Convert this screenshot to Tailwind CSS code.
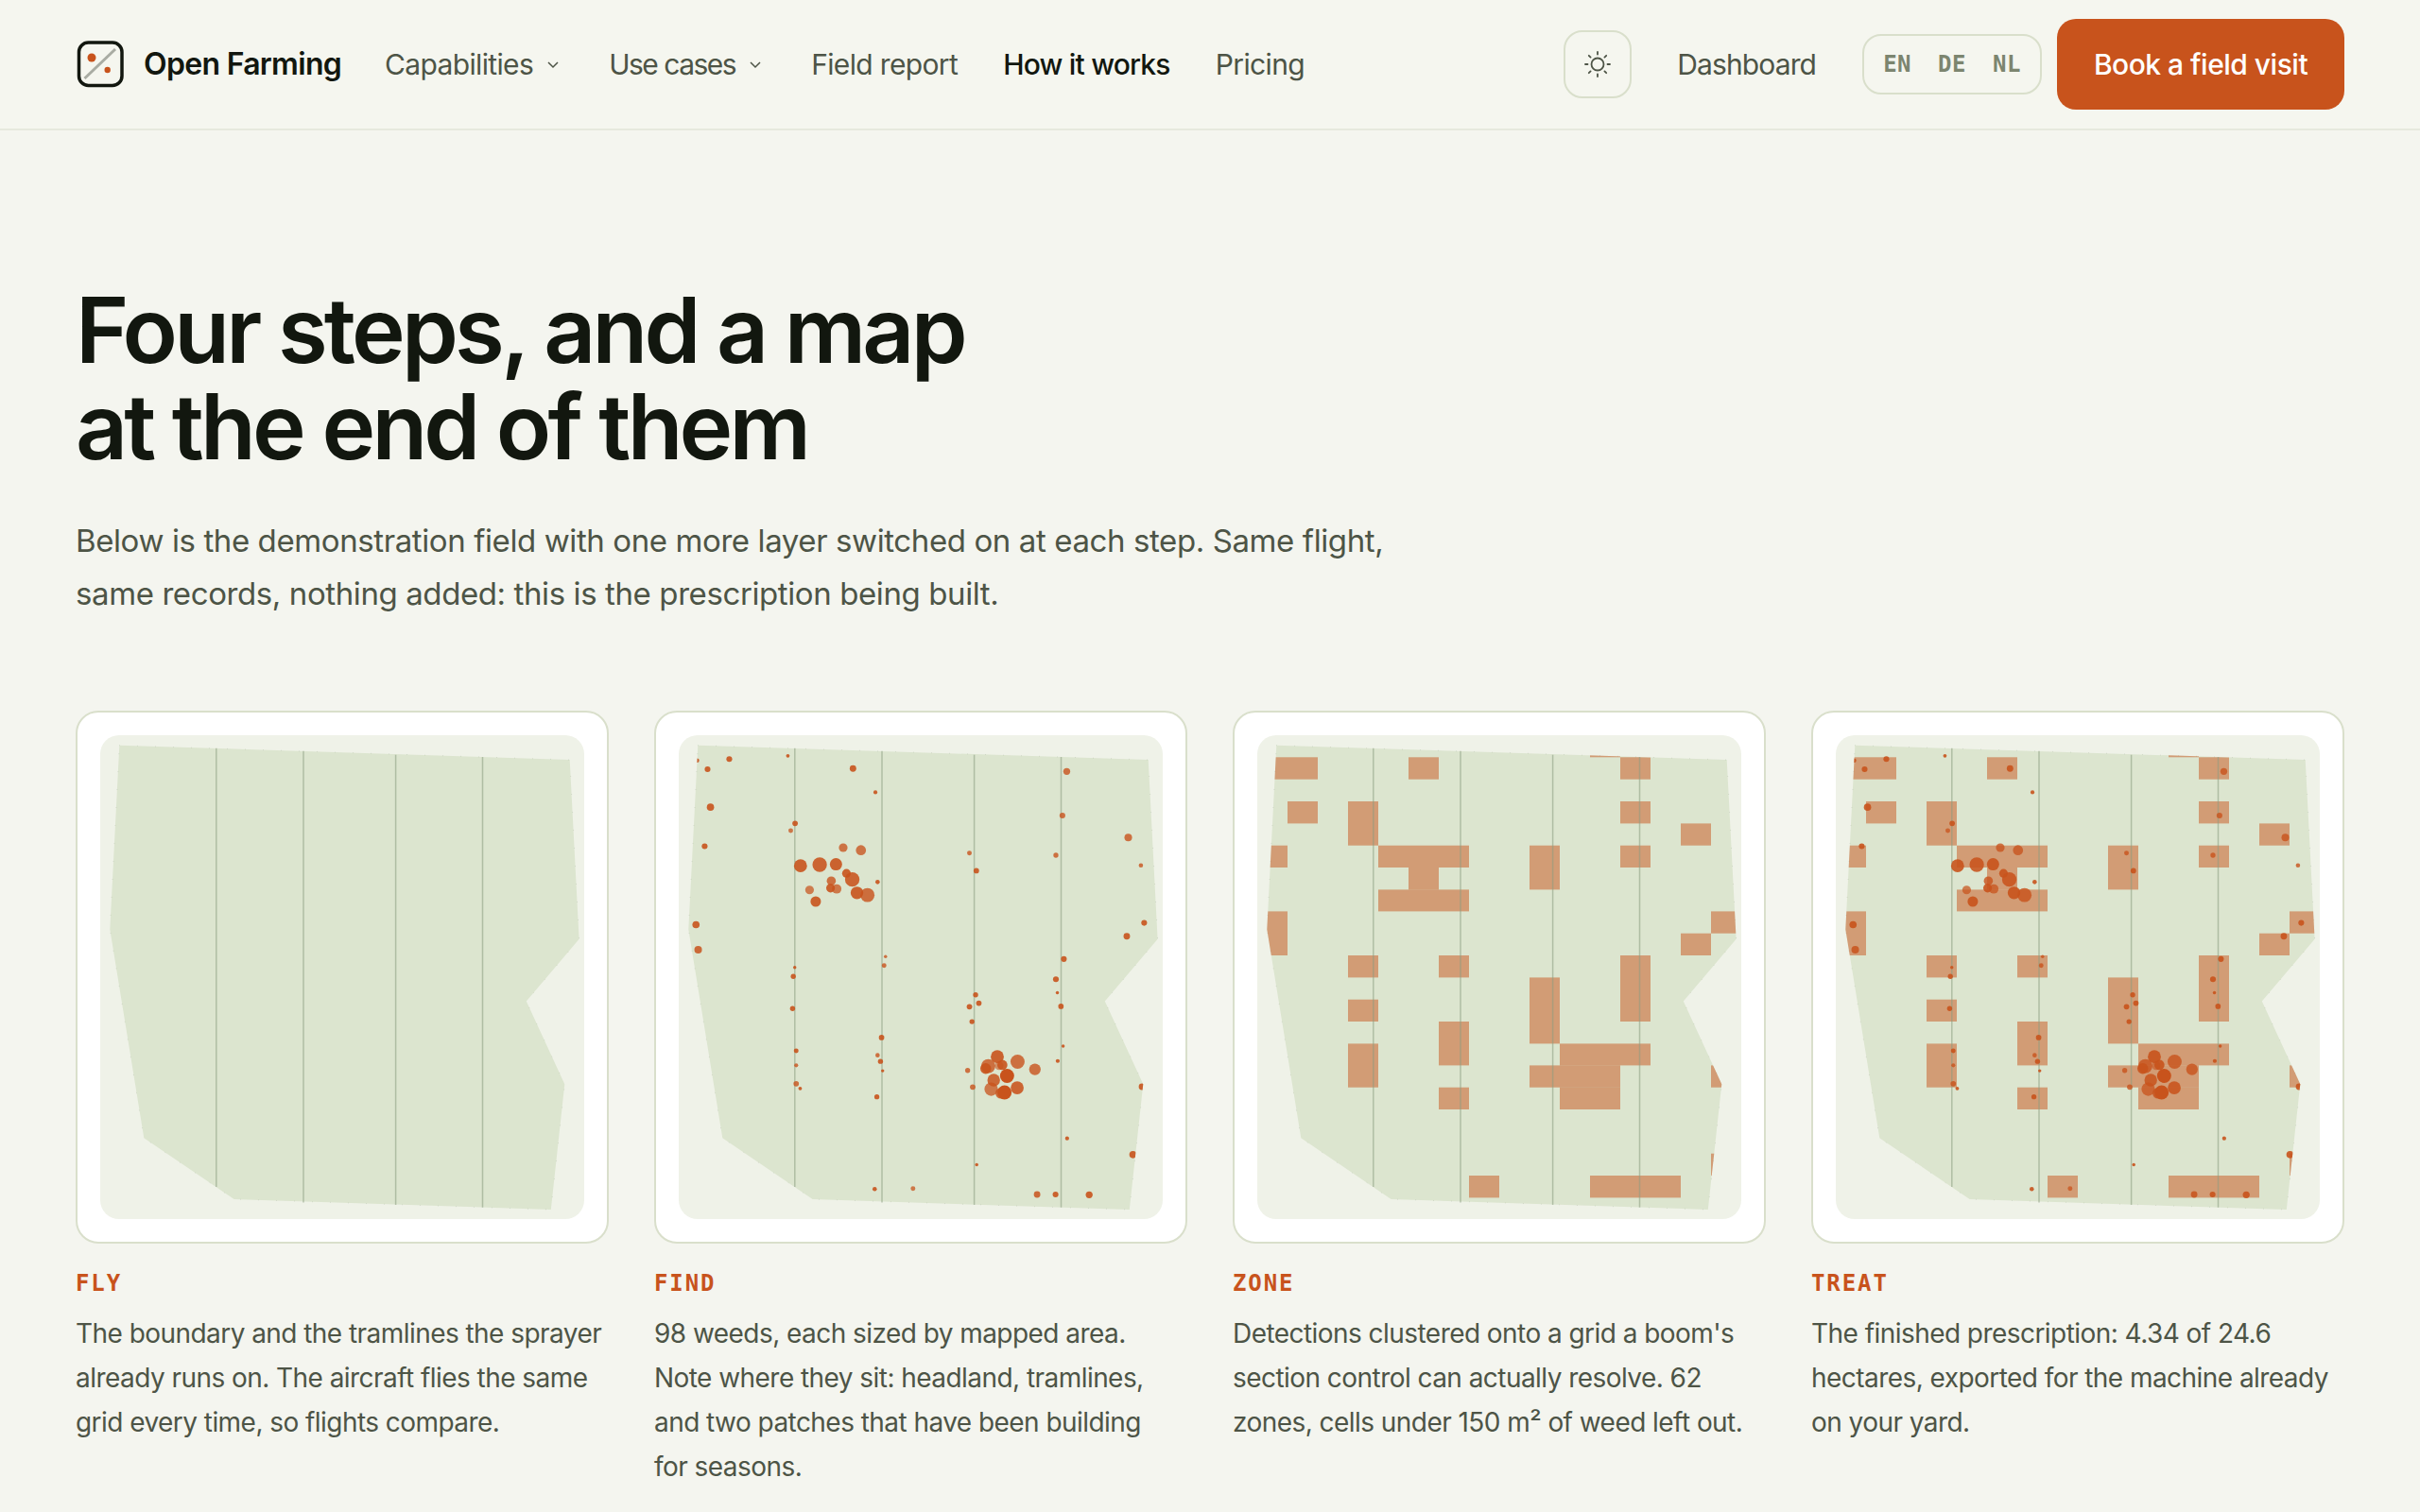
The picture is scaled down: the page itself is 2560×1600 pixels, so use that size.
<!DOCTYPE html>
<html lang="en">
  <head>
    <meta charset="UTF-8" />
    <meta name="viewport" content="width=device-width, initial-scale=1.0" />
    <title>How it works - Open Farming</title>
    <script src="https://cdn.jsdelivr.net/npm/@tailwindcss/browser@4"></script>
  </head>
  <body class="bg-[#f4f5ef] min-h-screen font-['Inter',sans-serif] text-[#12170f] overflow-hidden">
    <!-- shared map layers, each card uses the ones it needs -->
    <svg class="absolute w-0 h-0" aria-hidden="true">
      <defs>
        <clipPath id="field-clip">
          <polygon points="20.3,10.7 496.7,26 506.6,215.8 450.8,281.6 491.3,369.3 476.8,502 141.6,491 46.3,426.3 10.3,205.5" />
        </clipPath>
        <g id="field">
          <polygon fill="#dce5cf" stroke="#6f7f66" stroke-opacity="0.35" stroke-width="0.7" stroke-dasharray="0.7 18.3" points="20.3,10.7 496.7,26 506.6,215.8 450.8,281.6 491.3,369.3 476.8,502 141.6,491 46.3,426.3 10.3,205.5" />
        </g>
        <g id="tramlines" stroke="#8b9c80" stroke-opacity="0.55" stroke-width="1.5">
          <line x1="122.8" y1="13.8" x2="122.8" y2="478" />
          <line x1="215" y1="16.8" x2="215" y2="494.4" />
          <line x1="312.6" y1="20.7" x2="312.6" y2="497" />
          <line x1="404.5" y1="23" x2="404.5" y2="499.8" />
        </g>
        <g id="zones" clip-path="url(#field-clip)" fill="#c8531c" fill-opacity="0.5">
          <rect x="352" y="0" width="32" height="23.3" />
          <rect x="0" y="23.3" width="64" height="23.4" />
          <rect x="160" y="23.3" width="32" height="23.4" />
          <rect x="384" y="23.3" width="32" height="23.4" />
          <rect x="32" y="70" width="32" height="23.4" />
          <rect x="96" y="70" width="32" height="46.7" />
          <rect x="384" y="70" width="32" height="23.4" />
          <rect x="448" y="93.4" width="32" height="23.3" />
          <rect x="0" y="116.7" width="32" height="23.3" />
          <rect x="128" y="116.7" width="96" height="23.3" />
          <rect x="288" y="116.7" width="32" height="46.7" />
          <rect x="384" y="116.7" width="32" height="23.3" />
          <rect x="160" y="140" width="32" height="23.4" />
          <rect x="128" y="163.4" width="96" height="23" />
          <rect x="0" y="186.4" width="32" height="46.6" />
          <rect x="480" y="186.4" width="32" height="23.3" />
          <rect x="448" y="209.7" width="32" height="23.3" />
          <rect x="96" y="233" width="32" height="23.4" />
          <rect x="192" y="233" width="32" height="23.4" />
          <rect x="384" y="233" width="32" height="70" />
          <rect x="288" y="256.4" width="32" height="70" />
          <rect x="96" y="279.7" width="32" height="23.3" />
          <rect x="192" y="303" width="32" height="46.4" />
          <rect x="96" y="326.4" width="32" height="46.3" />
          <rect x="320" y="326.4" width="96" height="23" />
          <rect x="288" y="349.4" width="96" height="23.3" />
          <rect x="480" y="349.4" width="32" height="23.3" />
          <rect x="192" y="372.7" width="32" height="23.3" />
          <rect x="320" y="372.7" width="64" height="23.3" />
          <rect x="480" y="442.7" width="32" height="23.3" />
          <rect x="224" y="466" width="32" height="23.4" />
          <rect x="352" y="466" width="96" height="23.4" />
        </g>
        <g id="weeds" clip-path="url(#field-clip)">
          <g transform="scale(0.38265) translate(-99.3 -98)" fill="#c8531c" fill-opacity="0.9">
            <circle cx="150" cy="168" r="6" /><circle cx="179" cy="192" r="8" /><circle cx="239" cy="164" r="8" />
            <circle cx="401" cy="155" r="5" /><circle cx="581" cy="190" r="9" /><circle cx="643" cy="256" r="5.5" />
            <circle cx="1172" cy="198" r="9.5" fill-opacity="0.8" /><circle cx="187" cy="297" r="10" /><circle cx="421" cy="342" r="7.5" />
            <circle cx="409" cy="362" r="6.5" fill-opacity="0.75" /><circle cx="1160" cy="320" r="8" fill-opacity="0.8" /><circle cx="171" cy="405" r="8" />
            <circle cx="1342" cy="381" r="10.5" fill-opacity="0.8" /><circle cx="903" cy="424" r="6.5" fill-opacity="0.8" /><circle cx="1142" cy="430" r="7" fill-opacity="0.8" />
            <circle cx="1377" cy="458" r="6" fill-opacity="0.8" /><circle cx="922" cy="473" r="7.5" />
            <circle cx="554" cy="409" r="12" fill-opacity="0.78" /><circle cx="603" cy="416" r="14" fill-opacity="0.78" /><circle cx="436" cy="459" r="18" />
            <circle cx="489" cy="456" r="20" fill-opacity="0.88" /><circle cx="534" cy="455" r="17" /><circle cx="563" cy="480" r="12" />
            <circle cx="579" cy="497" r="20" fill-opacity="0.88" /><circle cx="521" cy="501" r="12.5" fill-opacity="0.8" /><circle cx="519" cy="521" r="12" />
            <circle cx="536" cy="523" r="13" fill-opacity="0.75" /><circle cx="461" cy="526" r="12" fill-opacity="0.72" /><circle cx="592" cy="534" r="17.5" />
            <circle cx="621" cy="540" r="19.5" fill-opacity="0.82" /><circle cx="478" cy="558" r="14.5" /><circle cx="649" cy="504" r="6" />
            <circle cx="147" cy="622" r="10" /><circle cx="153" cy="691" r="10.5" fill-opacity="0.85" /><circle cx="1386" cy="617" r="8" />
            <circle cx="1338" cy="654" r="9" /><circle cx="671" cy="710" r="4.5" fill-opacity="0.8" /><circle cx="667" cy="735" r="6.5" fill-opacity="0.8" />
            <circle cx="420" cy="740" r="4.5" /><circle cx="416" cy="765" r="7" /><circle cx="1164" cy="717" r="8" />
            <circle cx="1142" cy="773" r="8" /><circle cx="1146" cy="810" r="4.5" /><circle cx="920" cy="816" r="7" />
            <circle cx="929" cy="839" r="7.5" /><circle cx="903" cy="849" r="7.5" /><circle cx="1156" cy="848" r="7.5" />
            <circle cx="414" cy="854" r="7" /><circle cx="910" cy="890" r="7" /><circle cx="660" cy="934" r="7.5" />
            <circle cx="1162" cy="958" r="4.5" /><circle cx="424" cy="971" r="6.5" /><circle cx="649" cy="983" r="6" fill-opacity="0.8" />
            <circle cx="657" cy="1000" r="7" /><circle cx="1147" cy="999" r="5.5" /><circle cx="424" cy="1011" r="5.5" fill-opacity="0.8" />
            <circle cx="663" cy="1026" r="4.5" /><circle cx="898" cy="1025" r="7" fill-opacity="0.8" />
            <circle cx="980" cy="987" r="18" /><circle cx="1036" cy="1001" r="19.5" fill-opacity="0.8" /><circle cx="955" cy="1013" r="19.5" fill-opacity="0.8" />
            <circle cx="985" cy="1012" r="12" fill-opacity="0.6" /><circle cx="994" cy="1010" r="14" /><circle cx="948" cy="1020" r="15" />
            <circle cx="1084" cy="1022" r="16" fill-opacity="0.8" /><circle cx="1007" cy="1040" r="19.5" fill-opacity="1" /><circle cx="970" cy="1052" r="17.5" fill-opacity="0.85" />
            <circle cx="1035" cy="1073" r="18" fill-opacity="0.88" /><circle cx="963" cy="1077" r="18.5" fill-opacity="0.75" /><circle cx="990" cy="1088" r="15" fill-opacity="0.85" />
            <circle cx="1000" cy="1086" r="19.5" fill-opacity="1" /><circle cx="912" cy="1071" r="7.5" fill-opacity="0.8" /><circle cx="424" cy="1062" r="7.5" fill-opacity="0.8" />
            <circle cx="435" cy="1075" r="5" /><circle cx="647" cy="1098" r="7" /><circle cx="1380" cy="1070" r="9" />
            <circle cx="1173" cy="1213" r="5.5" /><circle cx="1355" cy="1258" r="10" /><circle cx="923" cy="1286" r="4.5" />
            <circle cx="641" cy="1353" r="6" /><circle cx="747" cy="1352" r="6.5" fill-opacity="0.75" /><circle cx="1090" cy="1368" r="9" fill-opacity="0.85" />
            <circle cx="1141" cy="1368" r="8" /><circle cx="1234" cy="1369" r="9.5" />
          </g>
        </g>
      </defs>
    </svg>

    <header class="flex items-center h-[138px] pl-20 pr-20 border-b-2 border-[#e6e9dd] bg-[#f5f6ef]">
      <a href="#" class="flex items-center gap-[20px]">
        <svg width="52" height="52" viewBox="0 0 52 52" fill="none">
          <rect x="3.5" y="3" width="45.5" height="45.5" rx="10" stroke="#12170f" stroke-width="3.5" />
          <line x1="9.5" y1="41" x2="42" y2="10" stroke="#a9aca3" stroke-width="3" />
          <circle cx="17" cy="19" r="4.5" fill="#c8531c" />
          <circle cx="33.7" cy="32" r="3.2" fill="#c8531c" />
        </svg>
        <span class="text-[32px] font-semibold tracking-[-0.7px]">Open Farming</span>
      </a>
      <nav class="flex items-center gap-12 ml-[46px] text-[30px] text-[#4d5446]">
        <a href="#" class="flex items-center gap-[14px] mr-1 tracking-[-0.65px]">
          Capabilities
          <svg width="14" height="9" viewBox="0 0 14 9" fill="none" stroke="#4d5446" stroke-width="1.5"><path d="M2 2l5 5 5-5" /></svg>
        </a>
        <a href="#" class="flex items-center gap-[14px] mr-1 tracking-[-1.5px]">
          Use cases
          <svg width="14" height="9" viewBox="0 0 14 9" fill="none" stroke="#4d5446" stroke-width="1.5"><path d="M2 2l5 5 5-5" /></svg>
        </a>
        <a href="#" class="tracking-[-0.65px]">Field report</a>
        <a href="#" class="font-medium text-[#12170f] tracking-[-0.8px]">How it works</a>
        <a href="#" class="tracking-[-0.6px]">Pricing</a>
      </nav>
      <div class="flex items-center ml-auto">
        <button class="flex items-center justify-center w-[72px] h-[72px] rounded-[20px] border-2 border-[#d9dfcb]">
          <svg width="28" height="28" viewBox="0 0 28 28" fill="none" stroke="#4d5446" stroke-width="1.8" stroke-linecap="round">
            <circle cx="14" cy="14" r="6.5" />
            <path d="M14 1v2.5M14 24.5V27M1 14h2.5M24.5 14H27M4.8 4.8l1.8 1.8M21.4 21.4l1.8 1.8M4.8 23.2l1.8-1.8M21.4 6.6l1.8-1.8" />
          </svg>
        </button>
        <a href="#" class="ml-[48px] text-[30px] text-[#4d5446] tracking-[-0.9px]">Dashboard</a>
        <div class="flex items-center justify-center gap-[28px] ml-[49px] w-[190px] h-[64px] rounded-[20px] border-2 border-[#d9dfcb] font-['DejaVu_Sans_Mono',monospace] text-[24px] font-bold tracking-[0.5px] text-[#7c856f]">
          <span>EN</span><span>DE</span><span>NL</span>
        </div>
        <a href="#" class="flex items-center justify-center ml-[16px] w-[304px] h-[96px] rounded-[20px] bg-[#c8531c] text-[30px] font-medium text-white tracking-[-0.5px]">Book a field visit</a>
      </div>
    </header>

    <main class="px-20">
      <h1 class="pt-[160px] text-[96px] leading-[102px] font-semibold tracking-[-3.8px]">Four steps, and a map<br />at the end of them</h1>
      <p class="mt-[42px] text-[33px] leading-[56px] text-[#4d5446] tracking-[-0.4px]">Below is the demonstration field with one more layer switched on at each step. Same flight,<br />same records, nothing added: this is the prescription being built.</p>

      <div class="grid grid-cols-4 gap-12 mt-[96px]">
        <section>
          <div class="p-6 bg-white border-2 border-[#d9dfcb] rounded-[24px]">
            <svg class="block w-full aspect-square rounded-[20px] bg-[#eff2e8]" viewBox="0 0 512 512">
              <use href="#field" /><use href="#tramlines" />
            </svg>
          </div>
          <h2 class="mt-[26px] font-['DejaVu_Sans_Mono',monospace] text-[24px] leading-8 font-bold tracking-[1.9px] text-[#c8531c]">FLY</h2>
          <p class="mt-[14px] text-[28px] leading-[47px] text-[#4d5446] tracking-[-0.55px]">The boundary and the tramlines the sprayer already runs on. The aircraft flies the same grid every time, so flights compare.</p>
        </section>
        <section>
          <div class="p-6 bg-white border-2 border-[#d9dfcb] rounded-[24px]">
            <svg class="block w-full aspect-square rounded-[20px] bg-[#eff2e8]" viewBox="0 0 512 512">
              <use href="#field" /><use href="#tramlines" /><use href="#weeds" />
            </svg>
          </div>
          <h2 class="mt-[26px] font-['DejaVu_Sans_Mono',monospace] text-[24px] leading-8 font-bold tracking-[1.9px] text-[#c8531c]">FIND</h2>
          <p class="mt-[14px] text-[28px] leading-[47px] text-[#4d5446] tracking-[-0.55px]">98 weeds, each sized by mapped area. Note where they sit: headland, tramlines, and two patches that have been building<br />for seasons.</p>
        </section>
        <section>
          <div class="p-6 bg-white border-2 border-[#d9dfcb] rounded-[24px]">
            <svg class="block w-full aspect-square rounded-[20px] bg-[#eff2e8]" viewBox="0 0 512 512">
              <use href="#field" /><use href="#zones" /><use href="#tramlines" />
            </svg>
          </div>
          <h2 class="mt-[26px] font-['DejaVu_Sans_Mono',monospace] text-[24px] leading-8 font-bold tracking-[1.9px] text-[#c8531c]">ZONE</h2>
          <p class="mt-[14px] text-[28px] leading-[47px] text-[#4d5446] tracking-[-0.55px]">Detections clustered onto a grid a boom's section control can actually resolve. 62 zones, cells under 150 m² of weed left out.</p>
        </section>
        <section>
          <div class="p-6 bg-white border-2 border-[#d9dfcb] rounded-[24px]">
            <svg class="block w-full aspect-square rounded-[20px] bg-[#eff2e8]" viewBox="0 0 512 512">
              <use href="#field" /><use href="#zones" /><use href="#tramlines" /><use href="#weeds" />
            </svg>
          </div>
          <h2 class="mt-[26px] font-['DejaVu_Sans_Mono',monospace] text-[24px] leading-8 font-bold tracking-[1.9px] text-[#c8531c]">TREAT</h2>
          <p class="mt-[14px] text-[28px] leading-[47px] text-[#4d5446] tracking-[-0.55px]">The finished prescription: 4.34 of 24.6 hectares, exported for the machine already on your yard.</p>
        </section>
      </div>
    </main>
  </body>
</html>
